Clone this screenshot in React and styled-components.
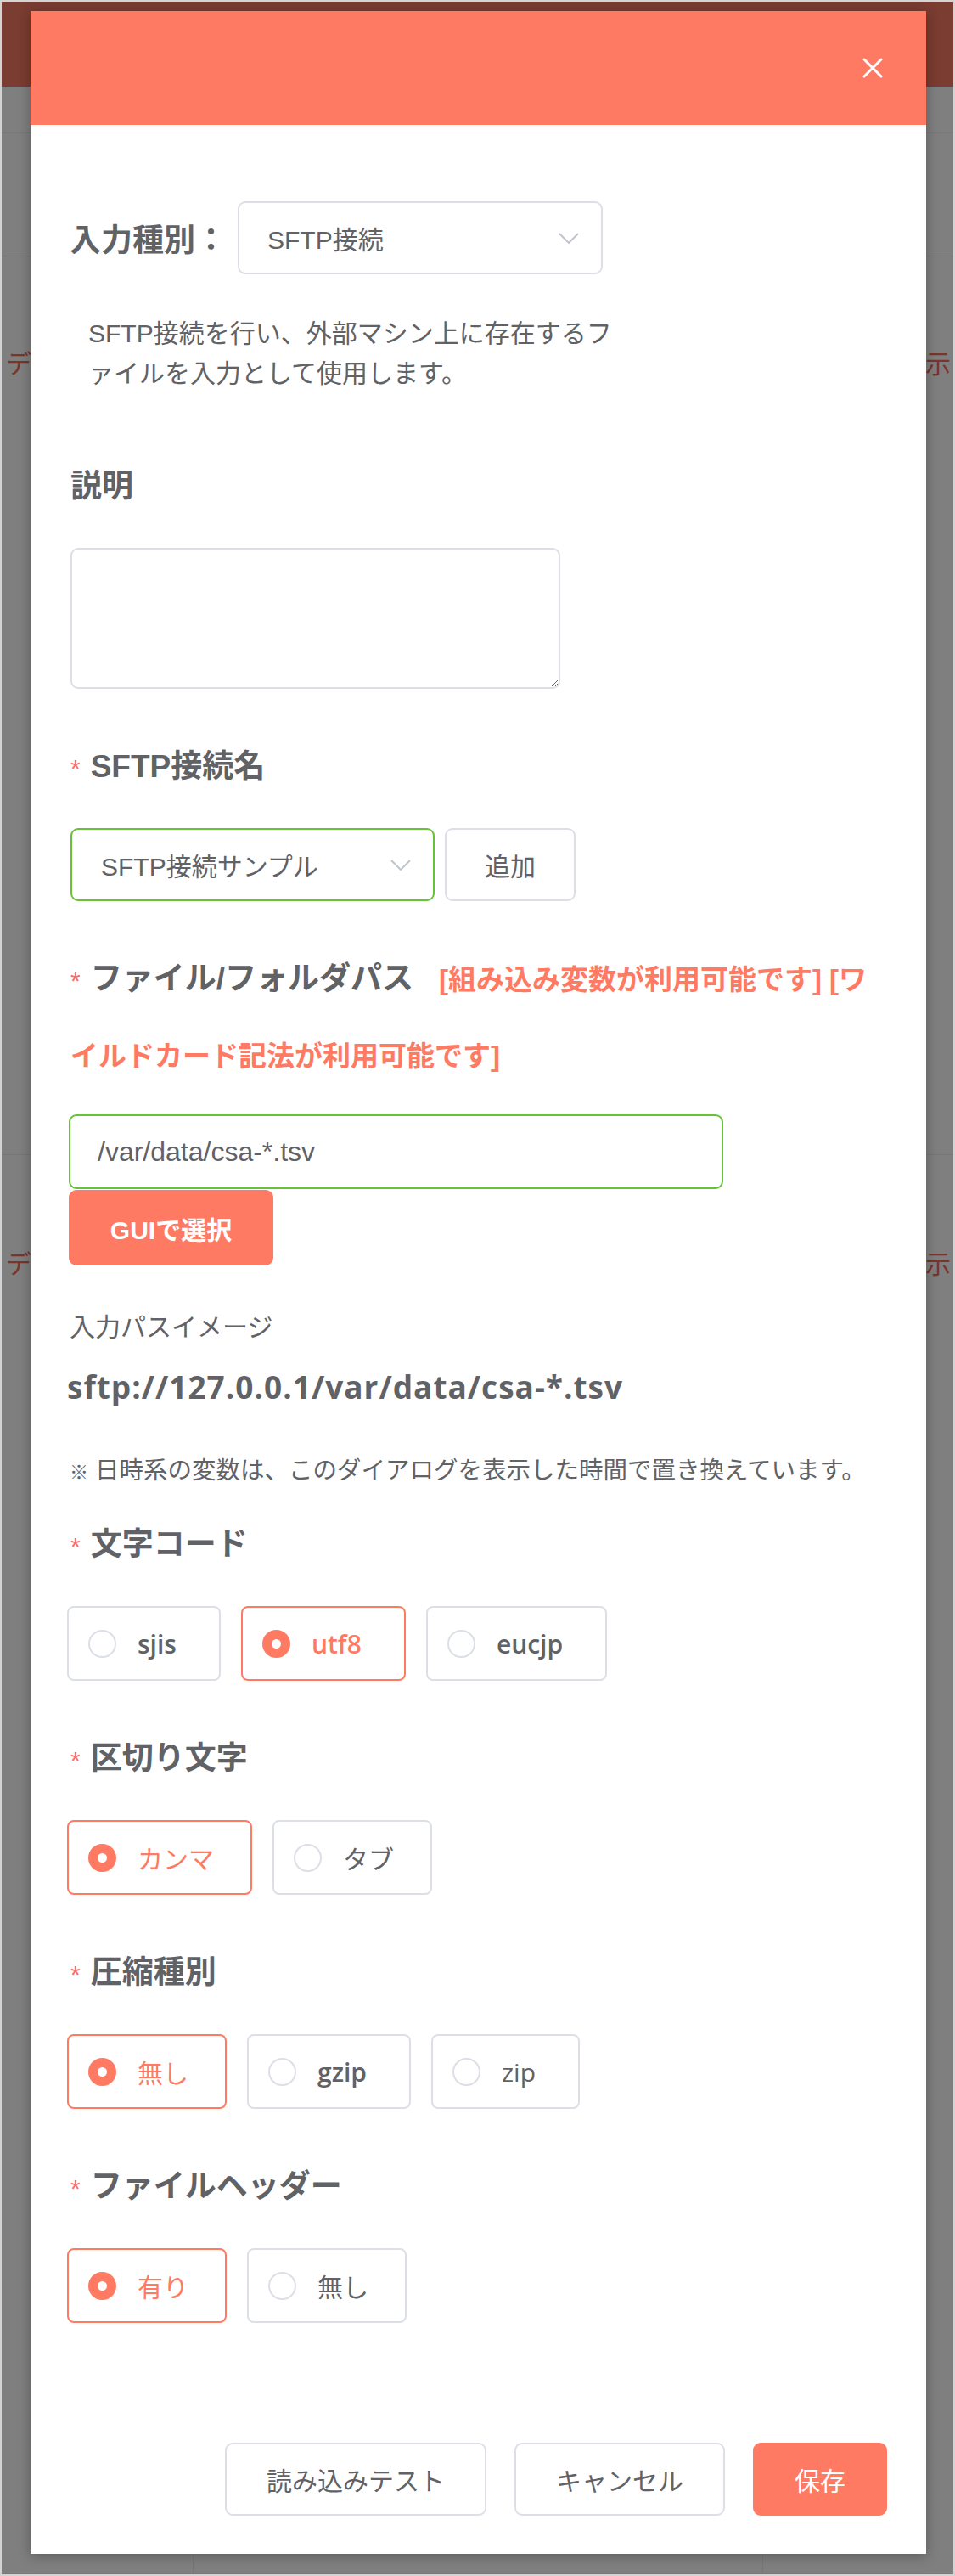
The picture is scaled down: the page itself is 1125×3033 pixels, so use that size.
import React from "react";
import styled, { createGlobalStyle } from "styled-components";

const CORAL = "#fe7a63";
const BORDER = "#dcdfe6";
const GREEN = "#67c23a";
const TEXT = "#606266";

const GlobalStyle = createGlobalStyle`
  html, body {
    margin: 0;
    padding: 0;
  }
  body {
    font-family: "Liberation Sans", "Noto Sans CJK JP", sans-serif;
    color: ${TEXT};
  }
  * {
    box-sizing: border-box;
  }
`;

const Screen = styled.div`
  position: relative;
  width: 1125px;
  height: 3033px;
  overflow: hidden;
  border: 2px solid #d4d4d4;
  background: #fff;
  display: flex;
  flex-direction: column;
`;

/* page behind the dialog */
const PageHeader = styled.div`
  height: 100px;
  flex: none;
  background: #f67862;
`;

const PageRow = styled.div`
  flex: ${(p) => (p.$grow ? "1" : "none")};
  height: ${(p) => (p.$h ? `${p.$h}px` : "auto")};
  border-bottom: 1px solid #ebeef5;
  display: grid;
  grid-template-columns: 225px 671px 1fr;
`;

const PageCell = styled.div`
  padding: ${(p) => p.$pt || 0}px 3px 0 5px;
  border-left: ${(p) => (p.$first ? "none" : "1px solid #ebeef5")};
  text-align: ${(p) => (p.$right ? "right" : "left")};
  font-size: 30px;
  line-height: 34px;
  color: #f56a58;
  white-space: nowrap;
  overflow: hidden;
`;

const Overlay = styled.div`
  position: absolute;
  inset: 0;
  background: rgba(0, 0, 0, 0.5);
`;

const Dialog = styled.div`
  position: absolute;
  top: 11px;
  left: 34px;
  width: 1055px;
  background: #fff;
  box-shadow: 0 2px 14px rgba(0, 0, 0, 0.3);
`;

const DialogHeader = styled.div`
  height: 134px;
  background: ${CORAL};
  display: flex;
  align-items: center;
  justify-content: flex-end;
  padding-right: 51px;
`;

const CloseButton = styled.button`
  border: none;
  background: none;
  padding: 0;
  width: 24px;
  height: 24px;
  display: flex;
  cursor: pointer;
`;

const DialogBody = styled.div`
  padding: 90px 46px 0 46px;
`;

const TypeRow = styled.div`
  display: flex;
  align-items: center;
  gap: 13px;
`;

const TypeLabel = styled.span`
  font-size: 37px;
  font-weight: 700;
  color: ${TEXT};
`;

const SelectBox = styled.div`
  width: ${(p) => p.$w}px;
  height: 86px;
  border: 2px solid ${(p) => (p.$valid ? GREEN : BORDER)};
  border-radius: 9px;
  display: flex;
  align-items: center;
  justify-content: space-between;
  padding: 0 26px 0 ${(p) => p.$pl || 33}px;
  font-size: 30px;
  color: ${TEXT};
`;

const Description = styled.p`
  margin: 46px 0 65px 22px;
  width: 640px;
  font-size: 30px;
  line-height: 47px;
  line-break: loose;
  color: ${TEXT};
`;

const FormItem = styled.div`
  margin-bottom: ${(p) => (p.$mb === undefined ? 47 : p.$mb)}px;
`;

const Label = styled.div`
  font-size: 37px;
  line-height: 90px;
  font-weight: 700;
  color: ${TEXT};
  margin-bottom: ${(p) => p.$mb || 27}px;
  padding-left: 1px;
`;

const Required = styled.span`
  display: inline-block;
  font-size: 30px;
  line-height: 1;
  font-weight: 400;
  color: #f56c6c;
  margin-right: 12px;
`;

const Hint = styled.span`
  margin-left: 30px;
  font-size: 33px;
  line-height: 1;
  color: ${CORAL};
`;

const TextArea = styled.textarea`
  display: block;
  width: 577px;
  height: 166px;
  margin-left: 1px;
  border: 2px solid ${BORDER};
  border-radius: 9px;
  font: inherit;
  font-size: 30px;
  padding: 10px 20px;
  outline: none;
`;

const InlineRow = styled.div`
  display: flex;
  gap: 12px;
  padding-left: 1px;
`;

const Button = styled.button`
  height: ${(p) => p.$h || 86}px;
  width: ${(p) => (p.$w ? `${p.$w}px` : "auto")};
  padding: 0 ${(p) => (p.$w ? 0 : 47)}px;
  border: 2px solid ${(p) => (p.$primary ? CORAL : BORDER)};
  border-radius: 9px;
  background: ${(p) => (p.$primary ? CORAL : "#fff")};
  color: ${(p) => (p.$primary ? "#fff" : TEXT)};
  font-family: "Liberation Sans", "Noto Sans CJK JP", sans-serif;
  font-size: 30px;
  font-weight: ${(p) => (p.$bold ? 700 : 400)};
  cursor: pointer;
  white-space: nowrap;
`;

const PathInput = styled.div`
  width: 771px;
  height: 88px;
  margin-left: -1px;
  border: 2px solid ${GREEN};
  border-radius: 9px;
  display: flex;
  align-items: center;
  padding-left: 32px;
  font-size: 32px;
  color: ${TEXT};
`;

const GuiButton = styled(Button)`
  display: block;
  margin: 1px 0 0 -1px;
`;

const Caption = styled.div`
  margin-top: 49px;
  font-size: 30px;
  line-height: 47px;
  color: ${TEXT};
`;

const PathPreview = styled.div`
  margin-top: 22px;
  font-family: "Open Sans", "Liberation Sans", sans-serif;
  font-size: 37px;
  font-weight: 700;
  letter-spacing: 1px;
  line-height: 50px;
  color: ${TEXT};
  margin-left: -3px;
`;

const Note = styled.div`
  margin-top: 51px;
  font-size: 28.5px;
  line-height: 45px;
  color: ${TEXT};
  white-space: nowrap;
`;

const NoteMark = styled.span`
  font-size: 22px;
`;

const RadioGroup = styled.div`
  display: flex;
  gap: 24px;
  margin-left: -3px;
`;

const RadioBox = styled.label`
  height: 88px;
  display: inline-flex;
  align-items: center;
  gap: 25px;
  padding: 0 ${(p) => (p.$latin ? 50 : 43)}px 0 23px;
  border: 2px solid ${(p) => (p.$checked ? CORAL : BORDER)};
  border-radius: 8px;
  cursor: pointer;
`;

const RadioDot = styled.span`
  width: 33px;
  height: 33px;
  border-radius: 50%;
  flex: none;
  border: 2px solid ${(p) => (p.$checked ? CORAL : BORDER)};
  background: ${(p) => (p.$checked ? CORAL : "#fff")};
  display: flex;
  align-items: center;
  justify-content: center;
  &::after {
    content: "";
    width: 11px;
    height: 11px;
    border-radius: 50%;
    background: #fff;
    display: ${(p) => (p.$checked ? "block" : "none")};
  }
`;

const RadioText = styled.span`
  font-family: "Open Sans", "Noto Sans CJK JP", sans-serif;
  font-size: 30px;
  font-weight: ${(p) => p.$weight || 400};
  color: ${(p) => (p.$checked ? CORAL : TEXT)};
`;

const DialogFooter = styled.div`
  display: flex;
  justify-content: flex-end;
  gap: 33px;
  padding: 141px 46px 45px;
`;

const Chevron = () => (
  <svg width="24" height="13" viewBox="0 0 24 13">
    <polyline points="1,1 12,12 23,1" fill="none" stroke="#c0c4cc" strokeWidth="2" />
  </svg>
);

const CloseIcon = () => (
  <svg width="24" height="24" viewBox="0 0 24 24">
    <path d="M2 2 L22 22 M22 2 L2 22" stroke="#fff" strokeWidth="3" strokeLinecap="round" />
  </svg>
);

const radioSections = [
  {
    label: "文字コード",
    options: [
      { text: "sjis", weight: 600, latin: true },
      { text: "utf8", weight: 600, latin: true, checked: true },
      { text: "eucjp", weight: 600, latin: true },
    ],
  },
  {
    label: "区切り文字",
    options: [{ text: "カンマ", checked: true }, { text: "タブ" }],
  },
  {
    label: "圧縮種別",
    options: [
      { text: "無し", checked: true },
      { text: "gzip", weight: 600, latin: true },
      { text: "zip", latin: true },
    ],
  },
  {
    label: "ファイルヘッダー",
    options: [{ text: "有り", checked: true }, { text: "無し" }],
  },
];

const Radio = ({ text, checked, weight, latin }) => (
  <RadioBox $checked={checked} $latin={latin}>
    <RadioDot $checked={checked} />
    <RadioText $checked={checked} $weight={weight}>
      {text}
    </RadioText>
  </RadioBox>
);

const BackgroundPage = () => (
  <>
    <PageHeader />
    <PageRow $h={55} />
    <PageRow $h={145} />
    <PageRow $h={1058}>
      <PageCell $first $pt={110}>データ</PageCell>
      <PageCell />
      <PageCell $right $pt={110}>表示</PageCell>
    </PageRow>
    <PageRow $grow>
      <PageCell $first $pt={112}>データ</PageCell>
      <PageCell />
      <PageCell $right $pt={112}>表示</PageCell>
    </PageRow>
  </>
);

export default function App() {
  return (
    <>
      <GlobalStyle />
      <Screen>
        <BackgroundPage />
        <Overlay>
          <Dialog>
            <DialogHeader>
              <CloseButton aria-label="close">
                <CloseIcon />
              </CloseButton>
            </DialogHeader>

            <DialogBody>
              <TypeRow>
                <TypeLabel>入力種別：</TypeLabel>
                <SelectBox $w={430}>
                  <span>SFTP接続</span>
                  <Chevron />
                </SelectBox>
              </TypeRow>

              <Description>
                SFTP接続を行い、外部マシン上に存在するファイルを入力として使用します。
              </Description>

              <FormItem>
                <Label>説明</Label>
                <TextArea />
              </FormItem>

              <FormItem>
                <Label>
                  <Required>*</Required>SFTP接続名
                </Label>
                <InlineRow>
                  <SelectBox $w={429} $valid $pl={34}>
                    <span>SFTP接続サンプル</span>
                    <Chevron />
                  </SelectBox>
                  <Button $w={154}>追加</Button>
                </InlineRow>
              </FormItem>

              <FormItem $mb={18}>
                <Label $mb={24}>
                  <Required>*</Required>ファイル/フォルダパス
                  <Hint>[組み込み変数が利用可能です] [ワイルドカード記法が利用可能です]</Hint>
                </Label>
                <PathInput>/var/data/csa-*.tsv</PathInput>
                <GuiButton $primary $bold $h={89} $w={241}>
                  GUIで選択
                </GuiButton>
                <Caption>入力パスイメージ</Caption>
                <PathPreview>sftp://127.0.0.1/var/data/csa-*.tsv</PathPreview>
                <Note>
                  <NoteMark>※</NoteMark> 日時系の変数は、このダイアログを表示した時間で置き換えています。
                </Note>
              </FormItem>

              {radioSections.map((section, i) => (
                <FormItem key={section.label} $mb={i === radioSections.length - 1 ? 0 : 47}>
                  <Label>
                    <Required>*</Required>
                    {section.label}
                  </Label>
                  <RadioGroup>
                    {section.options.map((opt) => (
                      <Radio key={opt.text} {...opt} />
                    ))}
                  </RadioGroup>
                </FormItem>
              ))}
            </DialogBody>

            <DialogFooter>
              <Button>読み込みテスト</Button>
              <Button>キャンセル</Button>
              <Button $primary>保存</Button>
            </DialogFooter>
          </Dialog>
        </Overlay>
      </Screen>
    </>
  );
}
